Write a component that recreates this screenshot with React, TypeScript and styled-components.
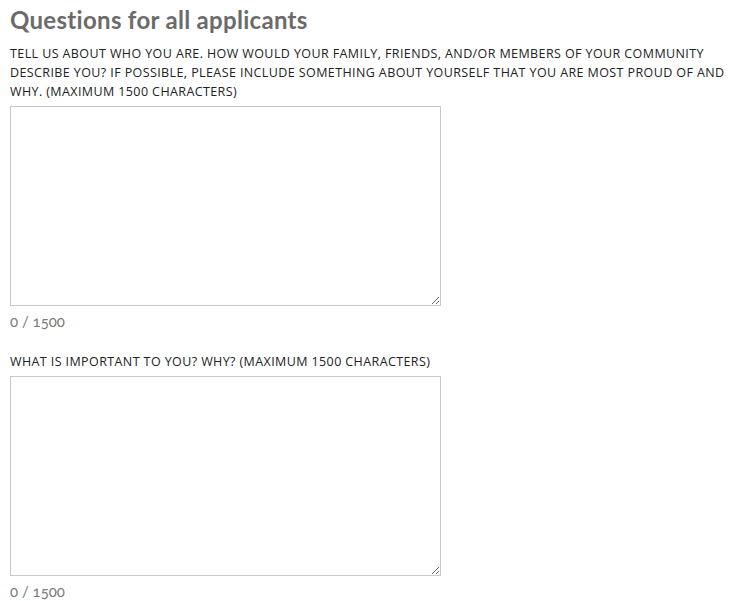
import styled, { createGlobalStyle } from "styled-components";

const GlobalStyle = createGlobalStyle`
  body {
    margin: 0;
    background: #ffffff;
  }
`;

const Page = styled.div`
  padding: 4px 0 0 10px;
  font-family: "Open Sans", "Liberation Sans", sans-serif;
`;

const Heading = styled.h2`
  margin: 0 0 8px 0;
  font-family: Lato, "Liberation Sans", sans-serif;
  font-weight: 700;
  font-size: 24px;
  letter-spacing: 0.3px;
  line-height: 32px;
  color: #6b6b6b;
`;

const Question = styled.div`
  display: flex;
  flex-direction: column;
  margin-bottom: 22px;
`;

const Label = styled.label`
  font-size: 12.5px;
  letter-spacing: 0.4px;
  line-height: 19px;
  color: #222222;
  text-transform: uppercase;
  margin-bottom: 5px;
`;

const Answer = styled.textarea`
  box-sizing: border-box;
  width: 431px;
  height: 200px;
  border: 1px solid #c8c8c8;
  margin: 0;
  padding: 4px;
  resize: vertical;
  font-family: inherit;
  font-size: 14px;
  outline: none;
`;

const Counter = styled.div`
  margin-top: 6px;
  font-family: Lato, "Liberation Sans", sans-serif;
  font-size: 15px;
  line-height: 18px;
  color: #7a7a7a;
  font-variant-numeric: oldstyle-nums;
`;

const questions = [
  "Tell us about who you are. How would your family, friends, and/or members of your community describe you? If possible, please include something about yourself that you are most proud of and why. (Maximum 1500 characters)",
  "What is important to you? Why? (Maximum 1500 characters)",
];

export default function App() {
  return (
    <Page>
      <GlobalStyle />
      <Heading>Questions for all applicants</Heading>
      {questions.map((q) => (
        <Question key={q}>
          <Label>{q}</Label>
          <Answer maxLength={1500} />
          <Counter>0 / 1500</Counter>
        </Question>
      ))}
    </Page>
  );
}
